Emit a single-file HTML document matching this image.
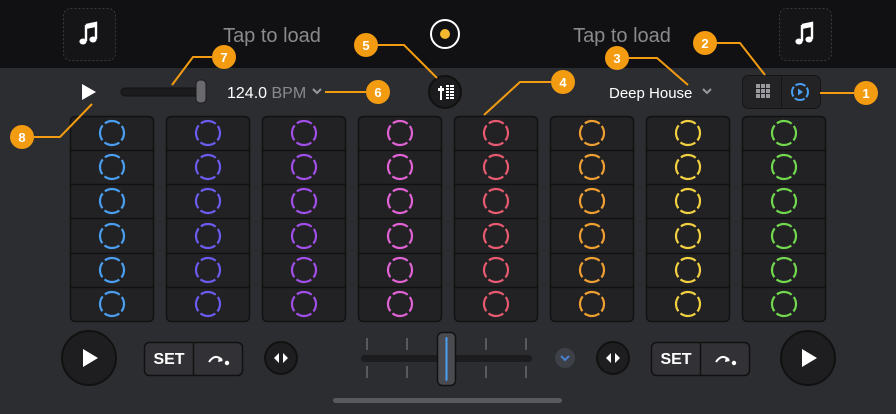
<!DOCTYPE html>
<html><head><meta charset="utf-8"><style>
html,body{margin:0;padding:0;background:#2c2d31;width:896px;height:414px;overflow:hidden;font-family:"Liberation Sans",sans-serif}
svg{position:absolute;left:0;top:0}
</style></head><body>
<svg width="896" height="414" viewBox="0 0 896 414" xmlns="http://www.w3.org/2000/svg" font-family="Liberation Sans, sans-serif">
<defs><g id="note"><path d="M-4 -9 L6 -11 L6 5" stroke="#fff" stroke-width="2.4" fill="none"/><path d="M-4 -9 V7" stroke="#fff" stroke-width="2.4"/><path d="M-4 -9 L6 -11 L6 -7 L-4 -5Z" fill="#fff"/><ellipse cx="-7" cy="7.5" rx="3.6" ry="3" fill="#fff"/><ellipse cx="3" cy="5.5" rx="3.6" ry="3" fill="#fff"/></g></defs>
<rect x="0" y="0" width="896" height="414" fill="#2c2d31"/>
<rect x="0" y="0" width="896" height="68" fill="#111113"/>
<rect x="63.5" y="8.5" width="52" height="52" rx="7" fill="#151517" stroke="#3a3a3e" stroke-dasharray="2 2"/>
<rect x="779.5" y="8.5" width="52" height="52" rx="7" fill="#151517" stroke="#3a3a3e" stroke-dasharray="2 2"/>
<use href="#note" x="90" y="34"/>
<use href="#note" x="806" y="34"/>
<text x="272" y="42" font-size="20" fill="#8a8a8e" text-anchor="middle">Tap to load</text>
<text x="622" y="42" font-size="20" fill="#8a8a8e" text-anchor="middle">Tap to load</text>
<circle cx="445" cy="34" r="14" fill="#111113" stroke="#fff" stroke-width="2"/>
<circle cx="445" cy="34" r="5" fill="#f5b82e"/>
<path d="M82 84 L96 92 L82 100 Z" fill="#fff"/>
<rect x="121" y="88" width="84" height="8" rx="4" fill="#1c1c1e" stroke="#111" />
<rect x="196" y="80" width="10" height="23" rx="4" fill="#6a6a6e" stroke="#1a1a1a"/>
<text x="227" y="98" font-size="16" fill="#fff">124.0 <tspan fill="#8a8a8e">BPM</tspan></text>
<path d="M313 89 l4 4 l4 -4" stroke="#9a9a9e" stroke-width="2" fill="none"/>
<circle cx="445" cy="92" r="16" fill="#1c1c1e" stroke="#111" stroke-width="2"/>
<g fill="#fff"><rect x="440" y="86" width="2" height="14"/><rect x="438" y="88" width="6" height="3"/>
<rect x="446" y="85" width="3" height="2"/><rect x="450" y="85" width="4" height="2"/>
<rect x="446" y="88" width="3" height="2"/><rect x="450" y="88" width="4" height="2"/>
<rect x="446" y="91" width="3" height="2"/><rect x="450" y="91" width="4" height="2"/>
<rect x="446" y="94" width="3" height="2"/><rect x="450" y="94" width="4" height="2"/>
<rect x="446" y="97" width="3" height="2"/><rect x="450" y="97" width="4" height="2"/></g>
<text x="609" y="98" font-size="15" fill="#fff">Deep House</text>
<path d="M703 89 l4 4 l4 -4" stroke="#9a9a9e" stroke-width="2" fill="none"/>
<rect x="742.5" y="75.5" width="78" height="33" rx="6" fill="#232326" stroke="#151515"/>
<line x1="781.5" y1="76" x2="781.5" y2="108" stroke="#151515"/>
<g fill="#9a9a9e"><rect x="756" y="84" width="4" height="4"/><rect x="761" y="84" width="4" height="4"/><rect x="766" y="84" width="4" height="4"/>
<rect x="756" y="89" width="4" height="4"/><rect x="761" y="89" width="4" height="4"/><rect x="766" y="89" width="4" height="4"/>
<rect x="756" y="94" width="4" height="4"/><rect x="761" y="94" width="4" height="4"/><rect x="766" y="94" width="4" height="4"/></g>
<circle cx="800" cy="92" r="8" fill="none" stroke="#4a9ff0" stroke-width="2" stroke-dasharray="10.5 2.07" stroke-dashoffset="5"/>
<path d="M798 88.5 L803 92 L798 95.5Z" fill="#4a9ff0"/>
<g fill="#222225" stroke="#111" stroke-width="1.5">
<rect x="70.5" y="116.5" width="83" height="205" rx="5"/>
<rect x="166.5" y="116.5" width="83" height="205" rx="5"/>
<rect x="262.5" y="116.5" width="83" height="205" rx="5"/>
<rect x="358.5" y="116.5" width="83" height="205" rx="5"/>
<rect x="454.5" y="116.5" width="83" height="205" rx="5"/>
<rect x="550.5" y="116.5" width="83" height="205" rx="5"/>
<rect x="646.5" y="116.5" width="83" height="205" rx="5"/>
<rect x="742.5" y="116.5" width="83" height="205" rx="5"/>
</g>
<g stroke="#111" stroke-width="1.5">
<path d="M70 150.5H154M70 184.5H154M70 218.5H154M70 253.5H154M70 287.5H154"/>
<path d="M166 150.5H250M166 184.5H250M166 218.5H250M166 253.5H250M166 287.5H250"/>
<path d="M262 150.5H346M262 184.5H346M262 218.5H346M262 253.5H346M262 287.5H346"/>
<path d="M358 150.5H442M358 184.5H442M358 218.5H442M358 253.5H442M358 287.5H442"/>
<path d="M454 150.5H538M454 184.5H538M454 218.5H538M454 253.5H538M454 287.5H538"/>
<path d="M550 150.5H634M550 184.5H634M550 218.5H634M550 253.5H634M550 287.5H634"/>
<path d="M646 150.5H730M646 184.5H730M646 218.5H730M646 253.5H730M646 287.5H730"/>
<path d="M742 150.5H826M742 184.5H826M742 218.5H826M742 253.5H826M742 287.5H826"/>
</g>
<g fill="none" stroke-width="2.2" stroke-dasharray="15.9 2.95" stroke-dashoffset="7.95">
<g stroke="#4a9ff0"><circle cx="112" cy="133" r="12"/><circle cx="112" cy="167" r="12"/><circle cx="112" cy="201" r="12"/><circle cx="112" cy="236" r="12"/><circle cx="112" cy="270" r="12"/><circle cx="112" cy="304" r="12"/></g>
<g stroke="#6b5cf0"><circle cx="208" cy="133" r="12"/><circle cx="208" cy="167" r="12"/><circle cx="208" cy="201" r="12"/><circle cx="208" cy="236" r="12"/><circle cx="208" cy="270" r="12"/><circle cx="208" cy="304" r="12"/></g>
<g stroke="#a24ee8"><circle cx="304" cy="133" r="12"/><circle cx="304" cy="167" r="12"/><circle cx="304" cy="201" r="12"/><circle cx="304" cy="236" r="12"/><circle cx="304" cy="270" r="12"/><circle cx="304" cy="304" r="12"/></g>
<g stroke="#e062d4"><circle cx="400" cy="133" r="12"/><circle cx="400" cy="167" r="12"/><circle cx="400" cy="201" r="12"/><circle cx="400" cy="236" r="12"/><circle cx="400" cy="270" r="12"/><circle cx="400" cy="304" r="12"/></g>
<g stroke="#e85a70"><circle cx="496" cy="133" r="12"/><circle cx="496" cy="167" r="12"/><circle cx="496" cy="201" r="12"/><circle cx="496" cy="236" r="12"/><circle cx="496" cy="270" r="12"/><circle cx="496" cy="304" r="12"/></g>
<g stroke="#f0a030"><circle cx="592" cy="133" r="12"/><circle cx="592" cy="167" r="12"/><circle cx="592" cy="201" r="12"/><circle cx="592" cy="236" r="12"/><circle cx="592" cy="270" r="12"/><circle cx="592" cy="304" r="12"/></g>
<g stroke="#f2d040"><circle cx="688" cy="133" r="12"/><circle cx="688" cy="167" r="12"/><circle cx="688" cy="201" r="12"/><circle cx="688" cy="236" r="12"/><circle cx="688" cy="270" r="12"/><circle cx="688" cy="304" r="12"/></g>
<g stroke="#72d84e"><circle cx="784" cy="133" r="12"/><circle cx="784" cy="167" r="12"/><circle cx="784" cy="201" r="12"/><circle cx="784" cy="236" r="12"/><circle cx="784" cy="270" r="12"/><circle cx="784" cy="304" r="12"/></g>
</g>
<circle cx="89" cy="358" r="27" fill="#1e1e20" stroke="#111" stroke-width="2"/>
<path d="M83 349 L98 358 L83 367Z" fill="#fff"/>
<circle cx="808" cy="358" r="27" fill="#1e1e20" stroke="#111" stroke-width="2"/>
<path d="M802 349 L817 358 L802 367Z" fill="#fff"/>
<rect x="144.5" y="342.5" width="98" height="33" rx="5" fill="#323236" stroke="#111" stroke-width="1.5"/>
<line x1="193.5" y1="343" x2="193.5" y2="375" stroke="#111" stroke-width="1.5"/>
<text x="169" y="364" font-size="16" font-weight="bold" fill="#fff" text-anchor="middle">SET</text>
<path d="M209 362 q6 -9 13 -2" stroke="#fff" stroke-width="2" fill="none"/><path d="M219 357 l4 4 l-5 1z" fill="#fff"/><circle cx="227" cy="363" r="2.2" fill="#fff"/>
<rect x="651.5" y="342.5" width="98" height="33" rx="5" fill="#323236" stroke="#111" stroke-width="1.5"/>
<line x1="700.5" y1="343" x2="700.5" y2="375" stroke="#111" stroke-width="1.5"/>
<text x="676" y="364" font-size="16" font-weight="bold" fill="#fff" text-anchor="middle">SET</text>
<path d="M716 362 q6 -9 13 -2" stroke="#fff" stroke-width="2" fill="none"/><path d="M726 357 l4 4 l-5 1z" fill="#fff"/><circle cx="734" cy="363" r="2.2" fill="#fff"/>
<circle cx="281" cy="358" r="16" fill="#1e1e20" stroke="#111" stroke-width="2"/>
<path d="M279 353 L274 358 L279 363Z M283 353 L288 358 L283 363Z" fill="#fff"/>
<circle cx="613" cy="358" r="16" fill="#1e1e20" stroke="#111" stroke-width="2"/>
<path d="M611 353 L606 358 L611 363Z M615 353 L620 358 L615 363Z" fill="#fff"/>
<g stroke="#6a6a6e" stroke-width="1.5"><path d="M367 338v12M367 366v12M407 338v12M407 366v12M486 338v12M486 366v12M526 338v12M526 366v12"/></g>
<rect x="361" y="355" width="171" height="7" rx="3.5" fill="#1c1c1e"/>
<rect x="437.5" y="332.5" width="18" height="53" rx="5" fill="#4a4b50" stroke="#111" stroke-width="1.5"/>
<rect x="445.5" y="337" width="2" height="44" rx="1" fill="#4a9ff0"/>
<circle cx="565" cy="358" r="10" fill="#3e4048"/>
<path d="M561 356 l4 4 l4 -4" stroke="#4a80d0" stroke-width="2" fill="none"/>
<rect x="333" y="398" width="229" height="5" rx="2.5" fill="#5a5a5e"/>
<g stroke="#f39c12" stroke-width="2" fill="none">
<path d="M820 93H854"/>
<path d="M716 43H740L765 75"/>
<path d="M629 58H657L688 85"/>
<path d="M551 82H520L484 115"/>
<path d="M378 45H404L437 78"/>
<path d="M325 92H366"/>
<path d="M212 57H193L172 85"/>
<path d="M34 137H60L92 104"/>
</g>
<g fill="#f39c12"><circle cx="866" cy="93" r="12"/><circle cx="705" cy="43" r="12"/><circle cx="617" cy="58" r="12"/><circle cx="563" cy="82" r="12"/><circle cx="366" cy="45" r="12"/><circle cx="378" cy="92" r="12"/><circle cx="224" cy="57" r="12"/><circle cx="22" cy="137" r="12"/></g>
<g fill="#fff" font-size="13" font-weight="bold" text-anchor="middle">
<text x="866" y="98">1</text><text x="705" y="48">2</text><text x="617" y="63">3</text><text x="563" y="87">4</text><text x="366" y="50">5</text><text x="378" y="97">6</text><text x="224" y="62">7</text><text x="22" y="142">8</text>
</g>
</svg>
</body></html>
